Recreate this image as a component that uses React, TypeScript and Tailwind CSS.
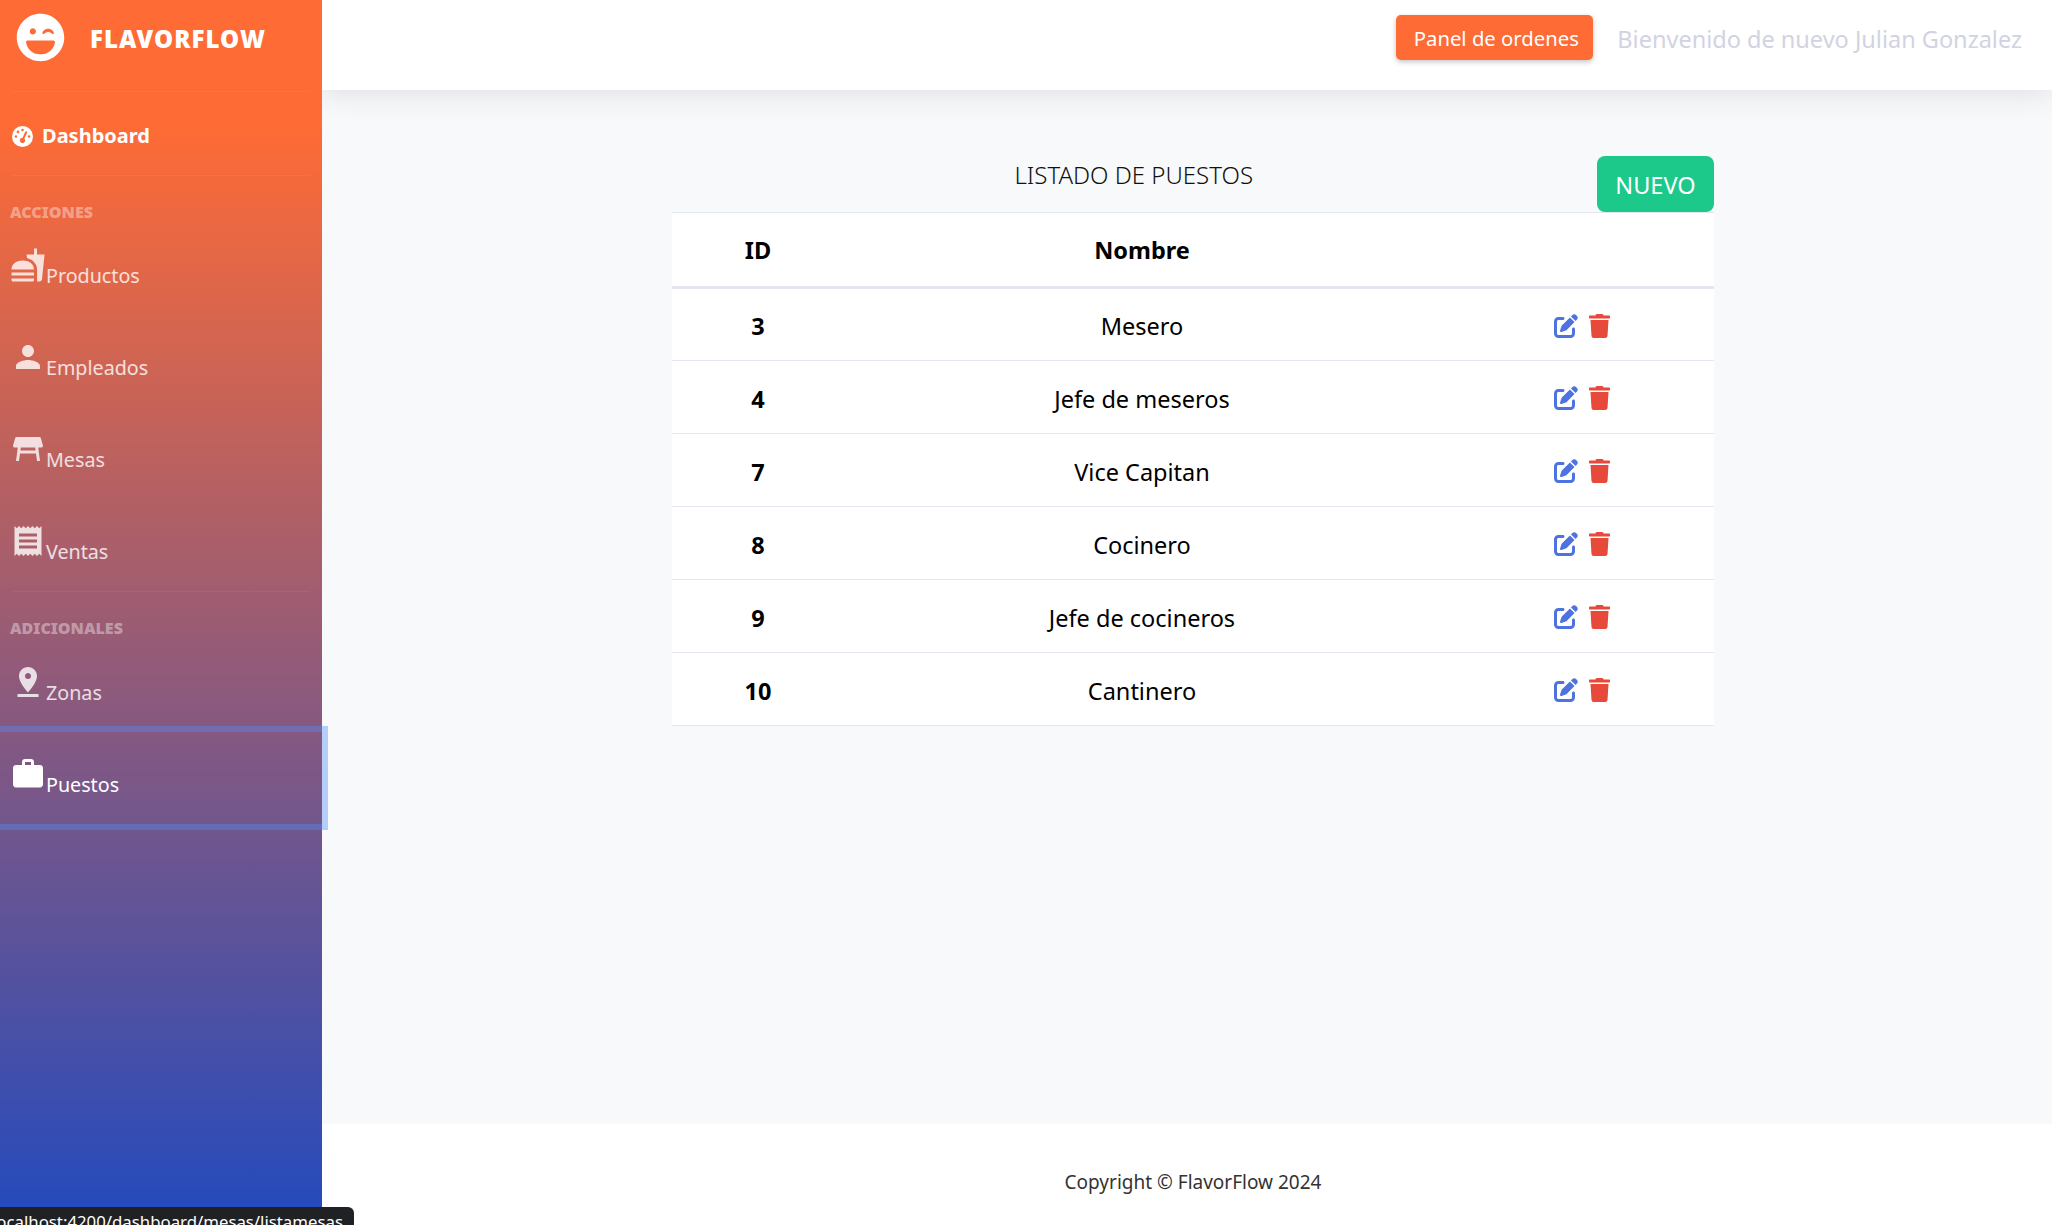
import { FaLaughWink, FaTrash } from "react-icons/fa";
import { FaGaugeHigh, FaPenToSquare } from "react-icons/fa6";
import { MdFastfood, MdPerson, MdTableRestaurant, MdReceipt, MdPinDrop, MdWork } from "react-icons/md";
import type { ReactNode } from "react";

const rows = [
  { id: 3, name: "Mesero" },
  { id: 4, name: "Jefe de meseros" },
  { id: 7, name: "Vice Capitan" },
  { id: 8, name: "Cocinero" },
  { id: 9, name: "Jefe de cocineros" },
  { id: 10, name: "Cantinero" },
];

function Item({ icon, label, active = false }: { icon: ReactNode; label: string; active?: boolean }) {
  return (
    <div
      className={
        active
          ? "relative z-20 flex h-[92px] items-start pl-[10px] pt-[24px] text-white outline-[6px] outline-solid outline-[#4f8ff7]/40"
          : "flex h-[92px] items-start pl-[10px] pt-[24px] text-white/80"
      }
    >
      <span className="h-9 w-9 shrink-0 text-[36px] leading-none">{icon}</span>
      <span className="mt-[15px] text-[19.7px] leading-[28px]">{label}</span>
    </div>
  );
}

export default function App() {
  return (
    <div className="relative flex h-[1225px] w-full overflow-hidden font-['Noto_Sans','Open_Sans',sans-serif]">
      <aside className="relative z-10 flex h-full w-[322px] shrink-0 flex-col bg-[linear-gradient(180deg,#ff6b35_10%,#224abe_100%)]">
        <div className="flex h-[91px] items-start pl-4 pt-[13px] text-white">
          <FaLaughWink className="h-[49px] w-[49px]" />
          <span className="ml-[25px] mt-[8px] text-[24px] font-black leading-[36px] tracking-[1.05px]">FLAVORFLOW</span>
        </div>
        <div className="mx-3 h-px bg-white/5" />
        <div className="flex h-[83px] items-center pl-3 pt-[5px] font-bold text-white">
          <FaGaugeHigh className="h-[21px] w-[21px]" />
          <span className="ml-[9px] text-[20px]">Dashboard</span>
        </div>
        <div className="mx-3 h-px bg-white/5" />
        <div className="flex h-[47px] items-end pl-[10px] text-[16px] font-black leading-[22px] text-white/40">ACCIONES</div>
        <Item icon={<MdFastfood />} label="Productos" />
        <Item icon={<MdPerson />} label="Empleados" />
        <Item icon={<MdTableRestaurant />} label="Mesas" />
        <Item icon={<MdReceipt />} label="Ventas" />
        <div className="mx-3 h-px bg-white/5" />
        <div className="flex h-[48px] items-end pl-[10px] text-[16px] font-black leading-[24px] text-white/40">ADICIONALES</div>
        <Item icon={<MdPinDrop />} label="Zonas" />
        <Item icon={<MdWork />} label="Puestos" active />
      </aside>

      <main className="flex min-w-0 flex-1 flex-col">
        <header className="relative z-[5] flex h-[90px] shrink-0 items-start justify-end bg-white pr-[30px] pt-[15px] shadow-[0_2px_28px_0_rgba(58,59,69,0.15)]">
          <button className="h-[45px] w-[197px] rounded-[5px] bg-[#ff6b35] pl-[3px] pt-[2px] text-[20.3px] text-white shadow-[0_2px_5px_rgba(58,59,69,0.3)]">
            Panel de ordenes
          </button>
          <span className="ml-[24px] text-[23.5px] leading-[48px] text-[#d1d3e2]">Bienvenido de nuevo Julian Gonzalez</span>
        </header>

        <section className="flex-1 bg-[#f8f9fb] pt-[66px]">
          <div className="ml-[350px] w-[1042px]">
            <div className="flex h-[56px] items-start justify-end">
              <h1 className="mr-[344px] mt-[3px] text-[24px] font-light leading-[32px] text-[#111]">LISTADO DE PUESTOS</h1>
              <button className="h-[56px] w-[117px] rounded-[8px] bg-[#1cc88a] pt-[4px] text-[23.5px] text-white">NUEVO</button>
            </div>
            <table className="w-full table-fixed border-collapse bg-white text-[23.5px] text-black">
              <thead>
                <tr className="h-[75px] border-y border-y-[#e3e6f0] border-b-[3px]">
                  <th className="w-[172px] pt-[2px] text-center font-bold">ID</th>
                  <th className="w-[596px] pt-[2px] text-center font-bold">Nombre</th>
                  <th />
                </tr>
              </thead>
              <tbody>
                {rows.map((r) => (
                  <tr key={r.id} className="h-[73px] border-b border-[#e3e6f0]">
                    <td className="pt-[5px] text-center font-bold">{r.id}</td>
                    <td className="pt-[5px] text-center">{r.name}</td>
                    <td className="pl-[114px] pt-[2px]">
                      <div className="flex items-center gap-[11px]">
                        <FaPenToSquare className="h-6 w-6 text-[#4e73df]" />
                        <FaTrash className="h-6 w-[21px] text-[#e74a3b]" />
                      </div>
                    </td>
                  </tr>
                ))}
              </tbody>
            </table>
          </div>
        </section>

        <footer className="flex h-[101px] shrink-0 items-center justify-center bg-white pl-[12px] pt-[16px] text-[19px] text-[#333]">
          Copyright © FlavorFlow 2024
        </footer>
      </main>

      <div className="absolute bottom-0 left-0 z-30 h-[18px] w-[354px] overflow-hidden rounded-tr-[6px] bg-[#202124] text-white">
        <span className="-ml-[8px] block whitespace-nowrap pt-[3px] text-[16.8px] leading-[24px]">localhost:4200/dashboard/mesas/listamesas</span>
      </div>
    </div>
  );
}
